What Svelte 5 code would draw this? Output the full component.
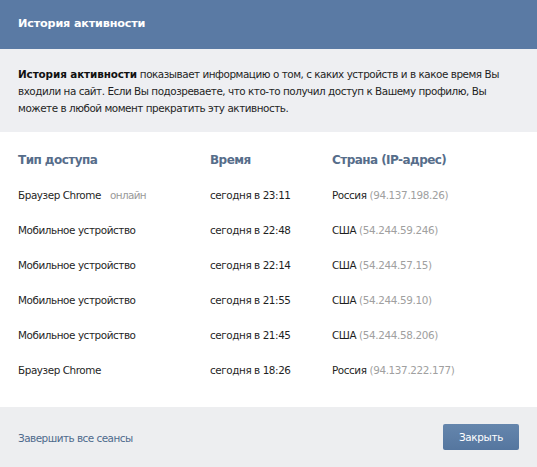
<script>
	const sessions = [
		{ access: 'Браузер Chrome', online: true, time: 'сегодня в 23:11', country: 'Россия', ip: '94.137.198.26' },
		{ access: 'Мобильное устройство', time: 'сегодня в 22:48', country: 'США', ip: '54.244.59.246' },
		{ access: 'Мобильное устройство', time: 'сегодня в 22:14', country: 'США', ip: '54.244.57.15' },
		{ access: 'Мобильное устройство', time: 'сегодня в 21:55', country: 'США', ip: '54.244.59.10' },
		{ access: 'Мобильное устройство', time: 'сегодня в 21:45', country: 'США', ip: '54.244.58.206' },
		{ access: 'Браузер Chrome', time: 'сегодня в 18:26', country: 'Россия', ip: '94.137.222.177' }
	];
</script>

<div class="box">
	<header class="title">История активности</header>
	<p class="info">
		<b>История активности</b> показывает информацию о том, с каких устройств и в какое время Вы<br />
		входили на сайт. Если Вы подозреваете, что кто-то получил доступ к Вашему профилю, Вы<br />
		можете в любой момент прекратить эту активность.
	</p>
	<div class="table">
		<div class="row head">
			<span>Тип доступа</span>
			<span>Время</span>
			<span>Страна (IP-адрес)</span>
		</div>
		{#each sessions as s}
			<div class="row">
				<span>{s.access}{#if s.online}<i class="online">онлайн</i>{/if}</span>
				<span>{s.time}</span>
				<span>{s.country} <i class="ip">({s.ip})</i></span>
			</div>
		{/each}
	</div>
	<footer class="foot">
		<a href="#end" class="end">Завершить все сеансы</a>
		<button class="close">Закрыть</button>
	</footer>
</div>

<style>
	:global(body) {
		margin: 0;
		background: #fff;
	}
	.box {
		width: 537px;
		height: 467px;
		display: flex;
		flex-direction: column;
		overflow: hidden;
		font-family: "DejaVu Sans", sans-serif;
		font-size: 10.4px;
		letter-spacing: -0.42px;
		color: #1f1f1f;
	}
	.title {
		height: 49px;
		box-sizing: border-box;
		padding: 17px 18px 0;
		background: #5a7aa4;
		color: #fff;
		font-weight: bold;
		font-size: 11.2px;
		letter-spacing: -0.15px;
		line-height: 14px;
	}
	.info {
		margin: 0;
		height: 83px;
		box-sizing: border-box;
		padding: 17px 18px 0;
		background: #eeeff2;
		line-height: 17px;
		white-space: nowrap;
		letter-spacing: -0.46px;
	}
	.info b {
		color: #111;
		letter-spacing: -0.1px;
	}
	.table {
		flex: 1;
		padding: 19px 18px 0;
	}
	.row {
		display: grid;
		grid-template-columns: 192px 122px 1fr;
		height: 35px;
		align-items: center;
	}
	.head {
		height: 18px;
		margin-bottom: 8px;
		color: #566d8a;
		font-weight: bold;
		font-size: 12px;
		letter-spacing: -0.55px;
	}
	.online {
		margin-left: 9px;
		color: #999;
		font-style: normal;
		letter-spacing: -0.6px;
	}
	.ip {
		color: #a0a0a0;
		font-style: normal;
		letter-spacing: -0.35px;
	}
	.foot {
		height: 60px;
		box-sizing: border-box;
		padding: 0 18px;
		background: #edeef0;
		display: flex;
		align-items: center;
		justify-content: space-between;
	}
	.end {
		color: #4d6a8c;
		text-decoration: none;
		padding-top: 2px;
		letter-spacing: -0.5px;
	}
	.close {
		width: 76px;
		height: 26px;
		border: none;
		border-radius: 2px;
		background: linear-gradient(#6586ad, #55769f);
		color: #fff;
		font: inherit;
		letter-spacing: -0.3px;
		padding: 0;
	}
</style>
